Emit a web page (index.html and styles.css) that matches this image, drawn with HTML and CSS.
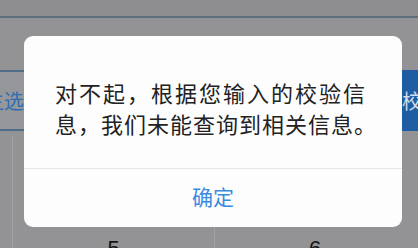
FILE: index.html
```html
<!DOCTYPE html>
<html lang="zh-CN">
<head>
<meta charset="utf-8">
<title>提示</title>
<link rel="stylesheet" href="styles.css">
</head>
<body>
<div class="page">
  <div class="topbar"></div>
  <div class="actions">
    <div class="btn btn-outline">主选</div>
    <div class="btn btn-fill">校验</div>
  </div>
  <div class="keypad">
    <div class="key">5</div>
    <div class="key">6</div>
  </div>
</div>
<div class="dialog">
  <p class="message"><span class="line line-wide">对不起，根据您输入的校验信</span><span class="line">息，我们未能查询到相关信息。</span></p>
  <div class="dialog-footer">
    <button class="confirm">确定</button>
  </div>
</div>
</body>
</html>
```
FILE: styles.css
```css
html, body {
  margin: 0;
  padding: 0;
}
body {
  width: 418px;
  height: 248px;
  overflow: hidden;
  position: relative;
  background: #939395;
  font-family: "Noto Sans CJK SC", "Noto Sans", sans-serif;
}
.page {
  display: flex;
  flex-direction: column;
  height: 248px;
}
.topbar {
  height: 16px;
  background: #8d8d8f;
  border-bottom: 2px solid #5b6f7c;
  flex: none;
}
.actions {
  margin-top: 52px;
  height: 61px;
  display: flex;
  justify-content: space-between;
  flex: none;
}
.btn {
  height: 61px;
  display: flex;
  align-items: center;
  font-size: 20px;
  box-sizing: border-box;
  white-space: nowrap;
  overflow: hidden;
}
.btn-outline {
  width: 24px;
  justify-content: flex-end;
  border-top: 2px solid #4f6d88;
  border-bottom: 2px solid #4f6d88;
  color: #2f6eb3;
  background: #95979b;
}
.btn-fill {
  width: 16px;
  background: #1e5ca4;
  color: #d5deea;
}
.keypad {
  margin-top: 5px;
  margin-left: 12px;
  flex: 1;
  display: grid;
  grid-template-columns: 201px 201px;
  border-left: 1px solid #a2a2a4;
}
.key {
  display: flex;
  justify-content: center;
  align-items: flex-end;
  font-size: 22px;
  color: #151515;
  line-height: 1;
  margin-bottom: -12px;
  font-family: "Liberation Sans", sans-serif;
}
.key + .key {
  border-left: 1px solid #a2a2a4;
}
.dialog {
  position: absolute;
  left: 24px;
  top: 36px;
  width: 378px;
  height: 191px;
  background: #fdfdfe;
  border-radius: 9px;
  display: flex;
  flex-direction: column;
}
.message {
  margin: 0;
  padding: 41px 0 29px 31px;
  font-size: 22px;
  line-height: 31px;
  color: #222;
  flex: none;
}
.line {
  display: block;
  white-space: nowrap;
  letter-spacing: 1px;
}
.line-wide {
  letter-spacing: 2px;
}
.dialog-footer {
  flex: 1;
  border-top: 1px solid #e6e6e8;
  display: flex;
}
.confirm {
  flex: 1;
  border: 0;
  background: transparent;
  font-family: inherit;
  font-size: 21px;
  color: #3b8ae0;
  padding: 0 0 4px 0;
}
```
